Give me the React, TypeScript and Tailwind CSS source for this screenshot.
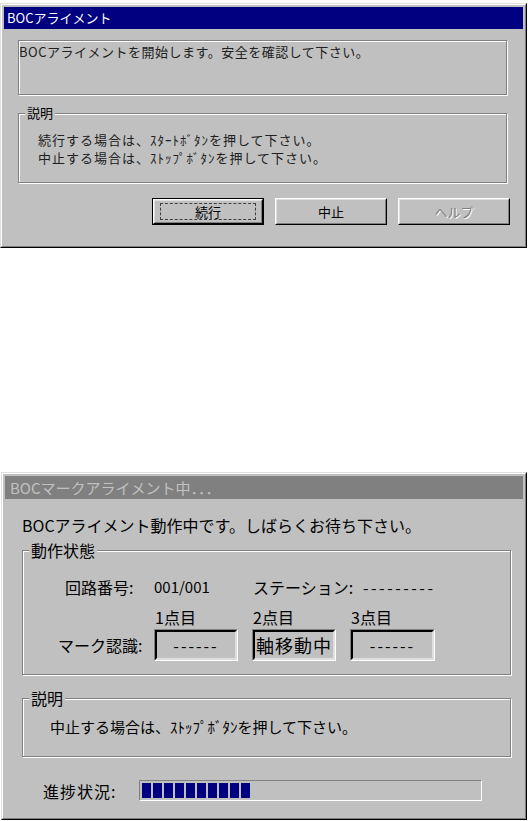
import type { ReactNode } from 'react'

const face = 'bg-[#c0c0c0]'

// Win95 style outer window frame
const Window = ({ className, children }: { className: string; children: ReactNode }) => (
  <div className={`border border-t-[#dfdfdf] border-l-[#dfdfdf] border-r-black border-b-black ${className}`}>
    <div className={`flex h-full flex-col border border-t-white border-l-white border-r-[#808080] border-b-[#808080] p-[2px] ${face}`}>
      {children}
    </div>
  </div>
)

const GroupBox = ({
  label,
  labelClass,
  className,
  children,
}: {
  label?: string
  labelClass?: string
  className: string
  children?: ReactNode
}) => (
  <div className={`relative border border-[#808080] shadow-[1px_1px_0_#fff,inset_1px_1px_0_#fff] ${className}`}>
    {label && (
      <span className={`absolute left-[6px] bg-[#c0c0c0] px-[2px] ${labelClass ?? ''}`}>{label}</span>
    )}
    {children}
  </div>
)

const Button = ({ label, primary, disabled }: { label: string; primary?: boolean; disabled?: boolean }) => (
  <div className={`h-[27px] w-[112px] ${primary ? 'border border-black' : ''}`}>
    <div className="h-full border border-t-white border-l-white border-r-black border-b-black">
      <div className="flex h-full items-center justify-center border border-t-[#dfdfdf] border-l-[#dfdfdf] border-r-[#808080] border-b-[#808080]">
        <div
          className={`flex items-center justify-center text-[13px] leading-[16px] ${
            primary ? 'h-[17px] w-[96px] border border-dashed border-[#404040]' : ''
          } ${disabled ? 'text-[#808080] [text-shadow:1px_1px_0_#fff]' : 'text-black'}`}
        >
          {label}
        </div>
      </div>
    </div>
  </div>
)

const Field = ({ width, children, big }: { width: string; children: ReactNode; big?: boolean }) => (
  <div className={`h-[32px] border border-t-[#808080] border-l-[#808080] border-r-white border-b-white ${width}`}>
    <div
      className={`flex h-full items-center justify-center border-2 border-t-black border-l-black border-r-[#dfdfdf] border-b-[#dfdfdf] ${
        big ? 'text-[18px] tracking-[1px]' : 'text-[16px] tracking-[2px]'
      } leading-[20px]`}
    >
      {children}
    </div>
  </div>
)

const StartDialog = () => (
  <Window className="mt-[3px] h-[245px] w-[527px]">
    <div className="flex h-[22px] items-center bg-[#000080] pl-[3px] text-[13px] leading-[16px] text-white">
      BOCアライメント
    </div>
    <GroupBox className="mt-[11px] ml-[14px] mr-[16px] h-[55px]">
      <p className="pt-[3px] text-[13px] leading-[16px] tracking-[0.5px] text-[#202020]">
        BOCアライメントを開始します。安全を確認して下さい。
      </p>
    </GroupBox>
    <GroupBox label="説明" labelClass="-top-[9px] text-[13px] leading-[16px]" className="mt-[18px] ml-[14px] mr-[16px] h-[70px]">
      <div className="pl-[19px] pt-[17px] text-[13px] leading-[18px] tracking-[1px] text-[#202020]">
        <p>続行する場合は、ｽﾀｰﾄﾎﾞﾀﾝを押して下さい。</p>
        <p>中止する場合は、ｽﾄｯﾌﾟﾎﾞﾀﾝを押して下さい。</p>
      </div>
    </GroupBox>
    <div className="mt-[15px] flex justify-end gap-[11px] pr-[13px]">
      <Button label="続行" primary />
      <Button label="中止" />
      <Button label="ヘルプ" disabled />
    </div>
  </Window>
)

const ProgressDialog = () => {
  const blocks = Array.from({ length: 10 })
  return (
    <Window className="mt-[224px] ml-[1px] h-[348px] w-[526px]">
      <div className="flex h-[23px] items-center bg-[#808080] pl-[5px] text-[15px] leading-[18px] text-[#c0c0c0]">
        BOCマークアライメント中．．．
      </div>
      <p className="mt-[16px] pl-[17px] text-[16px] leading-[20px] text-black">
        BOCアライメント動作中です。しばらくお待ち下さい。
      </p>
      <GroupBox
        label="動作状態"
        labelClass="-top-[11px] text-[16px] leading-[20px]"
        className="mt-[15px] ml-[17px] mr-[12px] h-[125px]"
      >
        <div className="pl-[35px] pt-[26px] text-[16px] leading-[20px] text-black">
          <div className="flex pl-[7px]">
            <span className="w-[89px]">回路番号:</span>
            <span className="w-[99px] text-[15px]">001/001</span>
            <span className="w-[110px]">ステーション:</span>
            <span className="tracking-[2.5px]">---------</span>
          </div>
          <div className="mt-[10px] flex">
            <span className="w-[97px]" />
            <span className="w-[98px]">1点目</span>
            <span className="w-[98px]">2点目</span>
            <span>3点目</span>
          </div>
          <div className="mt-[2px] flex items-center">
            <span className="w-[96px]">マーク認識:</span>
            <Field width="w-[84px]">------</Field>
            <span className="w-[14px]" />
            <Field width="w-[84px]" big>
              軸移動中
            </Field>
            <span className="w-[14px]" />
            <Field width="w-[85px]">------</Field>
          </div>
        </div>
      </GroupBox>
      <GroupBox
        label="説明"
        labelClass="-top-[11px] text-[16px] leading-[20px]"
        className="mt-[23px] ml-[17px] mr-[12px] h-[59px]"
      >
        <p className="pl-[27px] pt-[18px] text-[15px] leading-[20px] text-black">
          中止する場合は、ｽﾄｯﾌﾟﾎﾞﾀﾝを押して下さい。
        </p>
      </GroupBox>
      <div className="mt-[23px] flex items-center pl-[38px]">
        <span className="w-[96px] text-[16px] leading-[20px] tracking-[1px] text-black">進捗状況:</span>
        <div className="flex h-[21px] w-[343px] gap-[2px] border border-t-[#808080] border-l-[#808080] border-r-white border-b-white p-[2px]">
          {blocks.map((_, i) => (
            <div key={i} className="h-full w-[9px] bg-[#000080]" />
          ))}
        </div>
      </div>
    </Window>
  )
}

export default function App() {
  return (
    <div className="flex h-[821px] w-[528px] flex-col bg-white font-['Noto_Sans_CJK_JP','Liberation_Sans',sans-serif]">
      <StartDialog />
      <ProgressDialog />
    </div>
  )
}
